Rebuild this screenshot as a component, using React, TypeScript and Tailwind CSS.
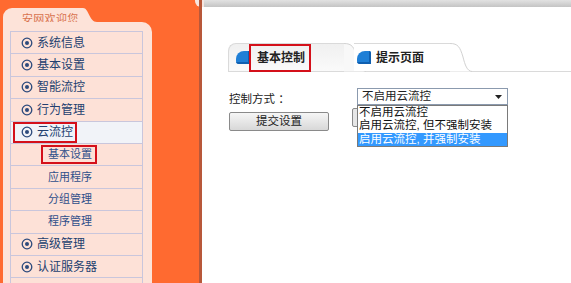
import React from "react";

const font = { fontFamily: '"Liberation Sans", "Noto Sans CJK SC", sans-serif' };

const topItems = ["系统信息", "基本设置", "智能流控", "行为管理"];
const subItems = ["基本设置", "应用程序", "分组管理", "程序管理"];
const bottomItems = ["高级管理", "认证服务器"];

function Target() {
  return (
    <svg width="12" height="12" viewBox="0 0 12 12" className="shrink-0">
      <circle cx="6" cy="6" r="4.8" fill="none" stroke="#2c4a7c" strokeWidth="1.3" />
      <circle cx="6" cy="6" r="2" fill="#2c4a7c" />
    </svg>
  );
}

function MenuRow({ label, active }: { label: string; active?: boolean }) {
  return (
    <div className={`flex h-[22.4px] items-center border-b border-[#c9c6dc] pl-[2px] ${active ? "bg-[#f1f3f8]" : ""}`}>
      <div className={`flex h-[21px] items-center gap-[4px] pl-[6px] pr-[2px] ${active ? "border-2 border-[#d4101a]" : "border-2 border-transparent"}`}>
        <Target />
        <span className="text-[12px] text-[#23406f]">{label}</span>
      </div>
    </div>
  );
}

function SubRow({ label, active }: { label: string; active?: boolean }) {
  return (
    <div className="flex h-[22.4px] items-center border-b border-[#c9c6dc] pl-[30px]">
      <span className={`pl-[5px] pr-[3px] text-[11px] leading-[15px] text-[#2f4f8a] ${active ? "border-2 border-[#d4101a]" : "border-2 border-transparent"}`}>
        {label}
      </span>
    </div>
  );
}

function TabCurve({ fill }: { fill: string }) {
  return (
    <svg width="22" height="29" viewBox="0 0 22 29" className="shrink-0">
      <path d="M0 0 C8 0 10 4 13 14 C15 22 17 28 22 28.5 L0 28.5 Z" fill={fill} />
      <path d="M0 0.5 C8 0.5 10 4 13 14 C15 22 17 28 22 28.5" fill="none" stroke="#d2d2d2" />
    </svg>
  );
}

function TabIcon() {
  return <div className="h-[13px] w-[14px] rounded-tl-[8px] rounded-bl-[3px] rounded-tr-[2px] bg-[#1f7fd6] shadow-[inset_-2px_-2px_0_#0f5fb0]" />;
}

export default function App() {
  return (
    <div className="flex h-[283px] w-[571px] overflow-hidden bg-white" style={font}>
      {/* left orange column */}
      <div className="relative flex h-full w-[202px] shrink-0 bg-[#ff6a30]">
        <div className="ml-[3px] mt-[8px] flex w-[149px] flex-col">
          <div className="flex h-[14px]">
            <div className="flex w-[80px] items-start rounded-tl-[9px] bg-[#fde3d9] pl-[19px] pt-[4px]">
              <span className="whitespace-nowrap text-[11px] leading-[14px] tracking-[0.3px] text-[#d9734f]">安网欢迎您</span>
            </div>
            <svg width="14" height="14" viewBox="0 0 14 14" className="shrink-0">
              <path d="M0 0 C6 0 6 14 14 14 L0 14 Z" fill="#fde3d9" />
            </svg>
          </div>
          <div className="flex-1 rounded-tr-[10px] bg-[#fde3d9] pl-[7px] pr-[9px] pt-[9px]">
            <div className="border-x border-t border-[#c9c6dc] bg-[#fde1d7]">
              {topItems.map((t) => (
                <MenuRow key={t} label={t} />
              ))}
              <MenuRow label="云流控" active />
              {subItems.map((t, i) => (
                <SubRow key={t} label={t} active={i === 0} />
              ))}
              {bottomItems.map((t) => (
                <MenuRow key={t} label={t} />
              ))}
              <div className="h-[22px]" />
            </div>
          </div>
        </div>
        <div className="absolute right-[-2px] top-0 h-[7px] w-[9px] rounded-bl-[6px] bg-[#f6e6e0]" />
        <div className="absolute right-0 top-0 h-full w-[3px] bg-[#b8583a]" />
      </div>

      {/* right content */}
      <div className="flex flex-1 flex-col">
        <div className="h-[7px] bg-gradient-to-b from-[#e2e2e2] to-[#c4c4c4]" />
        <div className="pl-[26px] pt-[36px]">
          <div className="flex h-[29px] border-b border-[#dadada]">
            <div className="flex items-center rounded-tl-[8px] border-t border-l border-[#dadada] bg-gradient-to-b from-[#f0f0f0] to-[#fafafa] pl-[7px]">
              <TabIcon />
              <div className="-ml-[1px] flex h-[28px] items-center border-2 border-[#d4101a] pl-[6px] pr-[4px]">
                <span className="text-[12px] font-bold text-[#222]">基本控制</span>
              </div>
              <div className="w-[33px]" />
            </div>
            <TabCurve fill="#f8f8f8" />
            <div className="-ml-[12px] flex items-center border-t border-[#dadada] bg-white pl-[3px]">
              <TabIcon />
              <span className="ml-[5px] text-[12px] font-bold text-[#222]">提示页面</span>
              <div className="w-[26px]" />
            </div>
            <TabCurve fill="#ffffff" />
          </div>

          <div className="relative mt-[16px] h-[60px]">
            <div className="flex items-start">
              <div className="w-[129px] pl-[1px]">
                <div className="mt-[2px] text-[11.5px] leading-[18px] text-[#222]">控制方式 ：</div>
                <button className="mt-[1px] h-[19px] w-[100px] rounded-[2px] border border-[#8a8a8a] bg-gradient-to-b from-[#f6f6f6] to-[#d8d8d8] text-[11.5px] leading-[17px] text-[#222]">
                  提交设置
                </button>
              </div>
              <div className="flex h-[17px] w-[151px] items-center justify-between border border-[#8b9aae] bg-white pl-[4px] pr-[5px]">
                <span className="text-[11.5px] text-[#222]">不启用云流控</span>
                <svg width="7" height="4" viewBox="0 0 7 4">
                  <path d="M0 0 H7 L3.5 4 Z" fill="#222" />
                </svg>
              </div>
            </div>
            <div className="absolute left-[124px] top-[20px] h-[19px] w-[10px] rounded-l-[2px] border border-[#8a8a8a] bg-[#e6e6e6]" />
            <div className="absolute left-[129px] top-[17px] w-[151px] border border-[#7a7a7a] bg-white text-[11.5px] leading-[13.3px] text-[#111]">
              <div className="pl-[1px]">不启用云流控</div>
              <div className="pl-[1px]">启用云流控, 但不强制安装</div>
              <div className="bg-[#3399ff] pl-[1px] text-white">启用云流控, 并强制安装</div>
            </div>
          </div>
        </div>
      </div>
    </div>
  );
}
